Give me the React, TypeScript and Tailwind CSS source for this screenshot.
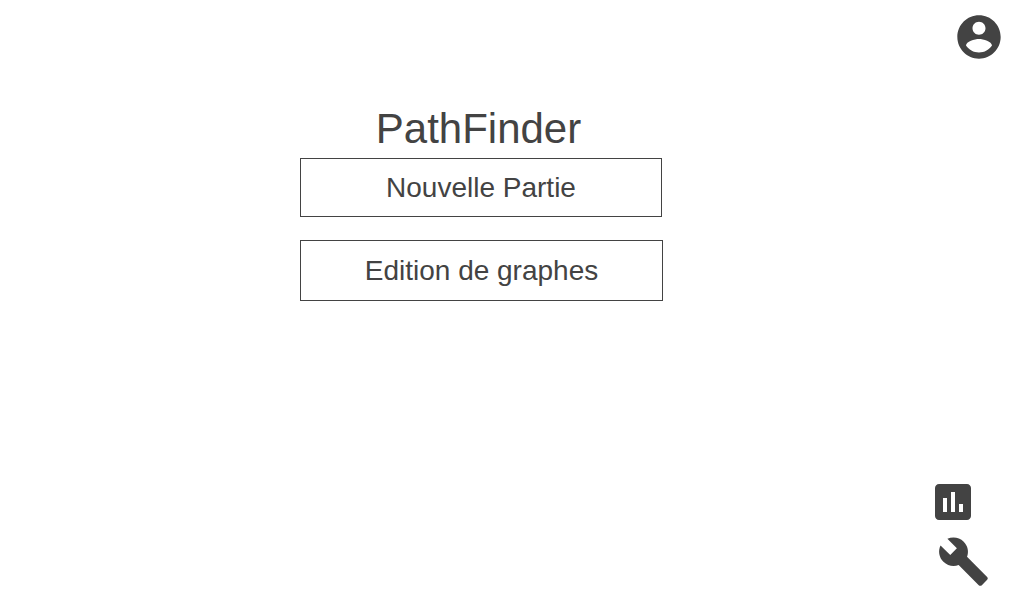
import React from "react";

const icons = {
  account:
    "M12 2C6.480 2 2 6.480 2 12s4.480 10 10 10 10-4.480 10-10S17.520 2 12 2zm0 3c1.660 0 3 1.340 3 3s-1.340 3-3 3-3-1.340-3-3 1.340-3 3-3zm0 14.200c-2.500 0-4.710-1.280-6-3.220.030-1.990 4-3.080 6-3.080 1.990 0 5.970 1.090 6 3.080-1.290 1.940-3.500 3.220-6 3.220z",
  stats:
    "M19 3H5c-1.100 0-2 .9-2 2v14c0 1.100.9 2 2 2h14c1.100 0 2-.9 2-2V5c0-1.100-.9-2-2-2zM9 17H7v-7h2v7zm4 0h-2V7h2v10zm4 0h-2v-4h2v4z",
  tools:
    "M22.700 19l-9.100-9.100c.9-2.300.4-5-1.500-6.900-2-2-5-2.400-7.400-1.300L9 6 6 9 1.600 4.700C.4 7.100.9 10.100 2.900 12.100c1.900 1.900 4.600 2.400 6.900 1.500l9.100 9.100c.4.4 1 .4 1.400 0l2.300-2.300c.5-.4.5-1.100.1-1.400z",
};

function IconButton({ label, path, className }: { label: string; path: string; className: string }) {
  return (
    <button type="button" aria-label={label} className={className}>
      <svg viewBox="0 0 24 24" fill="currentColor" aria-hidden="true" className="block size-full">
        <path d={path} />
      </svg>
    </button>
  );
}

export default function App() {
  return (
    <div className="flex min-h-screen justify-between bg-white font-['Liberation_Sans',Arial,sans-serif] text-[#434343]">
      <main className="ml-[300px] flex w-[363px] flex-col pt-[104px]">
        <h1 className="mb-1 pr-[6px] text-center text-[42px] leading-[50px]">PathFinder</h1>
        <button type="button" className="mr-px h-[59px] border border-[#434343] text-[28px]">
          Nouvelle Partie
        </button>
        <button type="button" className="mt-[23px] h-[61px] border border-[#434343] text-[28px]">
          Edition de graphes
        </button>
      </main>
      <aside className="flex flex-col items-end justify-between pt-[11px] pr-[19px] pb-3">
        <IconButton label="Compte" path={icons.account} className="size-[52px]" />
        <div className="flex flex-col items-end gap-[9px] pr-[15px]">
          <IconButton label="Statistiques" path={icons.stats} className="mr-[13px] size-12" />
          <IconButton label="Outils" path={icons.tools} className="size-[53px]" />
        </div>
      </aside>
    </div>
  );
}
